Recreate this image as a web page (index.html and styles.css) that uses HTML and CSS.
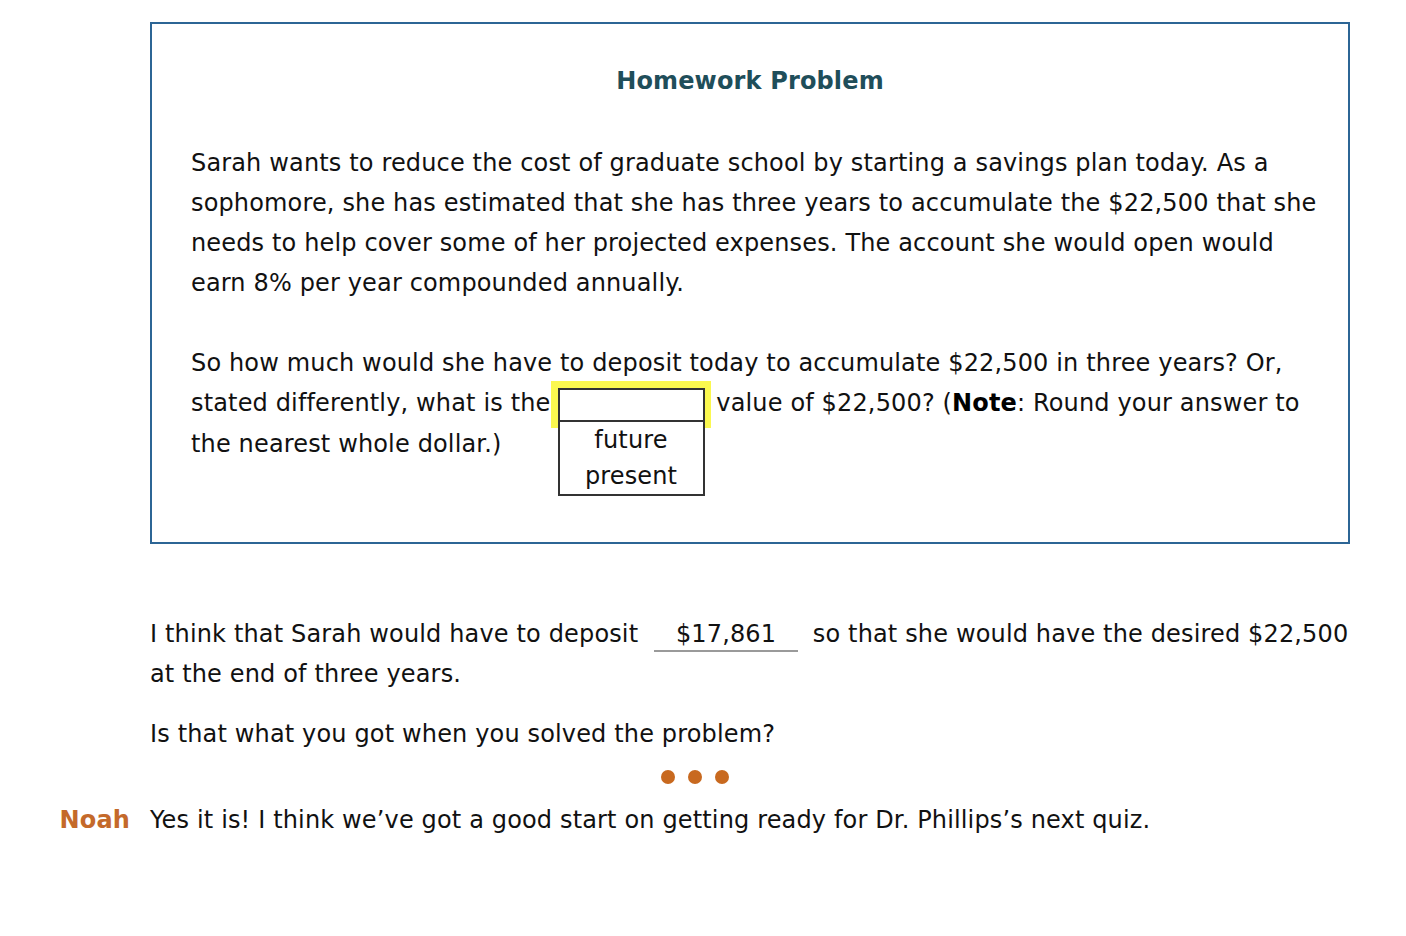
FILE: index.html
```html
<!DOCTYPE html>
<html>
<head>
<meta charset="utf-8">
<link rel="stylesheet" href="styles.css">
<title>Homework Problem</title>
</head>
<body>
<div class="page">
  <div class="row">
    <div class="label"></div>
    <div class="content">
      <section class="problem">
        <h2 class="problem-title">Homework Problem</h2>
        <p class="para">Sarah wants to reduce the cost of graduate school by starting a savings plan today. As a sophomore, she has estimated that she has three years to accumulate the $22,500 that she needs to help cover some of her projected expenses. The account she would open would earn 8% per year compounded annually.</p>
        <p class="para">So how much would she have to deposit today to accumulate $22,500 in three years? Or, stated differently, what is the<span class="select-wrap"><span class="select-box"></span><span class="select-list"><span class="opt">future</span><span class="opt">present</span></span></span> value of $22,500? (<b>Note</b>: Round your answer to the nearest whole dollar.)</p>
      </section>
    </div>
  </div>

  <div class="row dialog-first">
    <div class="label"></div>
    <div class="content">
      <p class="line">I think that Sarah would have to deposit <span class="blank">$17,861</span> so that she would have the desired $22,500 at the end of three years.</p>
      <p class="line q">Is that what you got when you solved the problem?</p>
      <div class="dots"><span class="dot"></span><span class="dot"></span><span class="dot"></span></div>
    </div>
  </div>

  <div class="row reply">
    <div class="label speaker">Noah</div>
    <div class="content">
      <p class="line">Yes it is! I think we’ve got a good start on getting ready for Dr. Phillips’s next quiz.</p>
    </div>
  </div>
</div>
</body>
</html>
```
FILE: styles.css
```css
html, body {
  margin: 0;
  padding: 0;
  background: #ffffff;
}
body {
  font-family: "DejaVu Sans", Verdana, sans-serif;
  font-size: 24px;
  line-height: 40px;
  letter-spacing: 0.15px;
  color: #111111;
}
.page {
  padding-top: 22px;
  width: 1350px;
}
.row {
  display: grid;
  grid-template-columns: 150px 1200px;
}
.label {
  text-align: right;
  padding-right: 20px;
}
.speaker {
  color: #c4692a;
  font-weight: bold;
}
.problem {
  border: 2px solid #2c6595;
  padding: 37px 26px 78px 39px;
}
.problem-title {
  margin: 0 0 42px -13px;
  font-size: 24px;
  line-height: 40px;
  text-align: center;
  color: #1f4e5a;
  font-weight: bold;
}
.para {
  margin: 0 0 40px 0;
}
.para:last-child {
  margin-bottom: 0;
}
.para b {
  font-weight: bold;
  color: #000;
}
.select-wrap {
  position: relative;
  display: inline-block;
  vertical-align: middle;
  margin: -4px -2px -4px 0;
  padding: 7px 6px 6px 7px;
  width: 147px;
  height: 34px;
  background: #fbf84f;
  line-height: 1;
}
.select-box {
  display: block;
  box-sizing: border-box;
  width: 147px;
  height: 34px;
  border: 2px solid #333333;
  background: #ffffff;
}
.select-list {
  position: absolute;
  left: 7px;
  top: 41px;
  box-sizing: border-box;
  width: 147px;
  border: 2px solid #333333;
  border-top: none;
  background: #ffffff;
  z-index: 2;
}
.opt {
  display: block;
  text-align: center;
  line-height: 36px;
  color: #111;
}
.dialog-first {
  margin-top: 70px;
}
.line {
  margin: 0;
}
.q {
  margin-top: 20px;
}
.blank {
  display: inline-block;
  width: 144px;
  margin: 0 7px 0 8px;
  line-height: 28px;
  padding-bottom: 2px;
  border-bottom: 2px solid #9a9a9a;
  text-align: center;
}
.dots {
  display: flex;
  gap: 13px;
  padding-left: 511px;
  padding-top: 16px;
  height: 30px;
  box-sizing: border-box;
}
.dot {
  width: 14px;
  height: 14px;
  border-radius: 50%;
  background: #c8691f;
}
.reply {
  margin-top: 16px;
}
```
